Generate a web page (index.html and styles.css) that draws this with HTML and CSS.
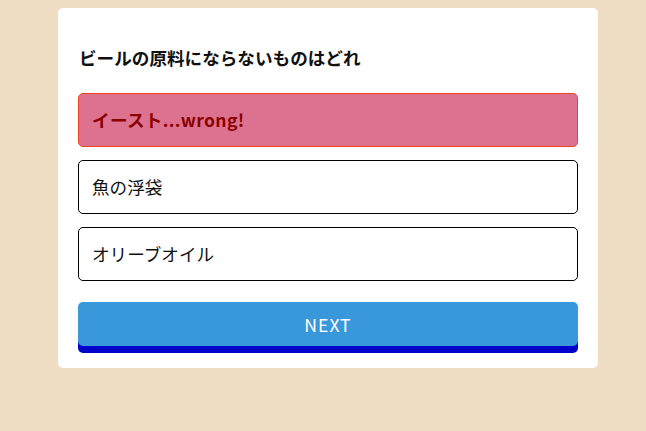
FILE: index.html
```html
<!DOCTYPE html>
<html lang="ja">
<head>
<meta charset="utf-8">
<title>Quiz</title>
<link rel="stylesheet" href="styles.css">
</head>
<body>
<div class="card">
  <h2 class="question">ビールの原料にならないものはどれ</h2>
  <div class="options">
    <div class="option wrong">イースト...wrong!</div>
    <div class="option">魚の浮袋</div>
    <div class="option">オリーブオイル</div>
  </div>
  <button class="next">NEXT</button>
</div>
</body>
</html>
```
FILE: styles.css
```css
html, body {
  margin: 0;
  padding: 0;
}
body {
  background: #eeddc2;
  font-family: "Noto Sans CJK JP", "Noto Sans", sans-serif;
  padding: 8px 0 0 58px;
}
.card {
  width: 500px;
  background: #fff;
  border-radius: 5px;
  padding: 37px 20px 22px;
}
.question {
  margin: 0 0 22px 1px;
  font-size: 17.6px;
  line-height: 26px;
  font-weight: 700;
  color: #111;
}
.options {
  display: flex;
  flex-direction: column;
  gap: 13px;
}
.option {
  border: 1px solid #000;
  border-radius: 5px;
  padding: 14px 13px;
  font-size: 17.6px;
  line-height: 24px;
  color: #111;
  background: #fff;
}
.option.wrong {
  background: #dc7290;
  border-color: #f2431f;
  color: #8b0000;
  font-weight: 700;
  letter-spacing: 0.3px;
}
.next {
  display: block;
  width: 100%;
  margin-top: 21px;
  height: 44px;
  border: none;
  border-radius: 5px;
  background: #3898da;
  box-shadow: 0 7px 0 #0000cc;
  color: #fff;
  font-family: "Noto Sans CJK JP", "Noto Sans", sans-serif;
  font-size: 17.6px;
  letter-spacing: 1px;
  padding: 0;
}
```
